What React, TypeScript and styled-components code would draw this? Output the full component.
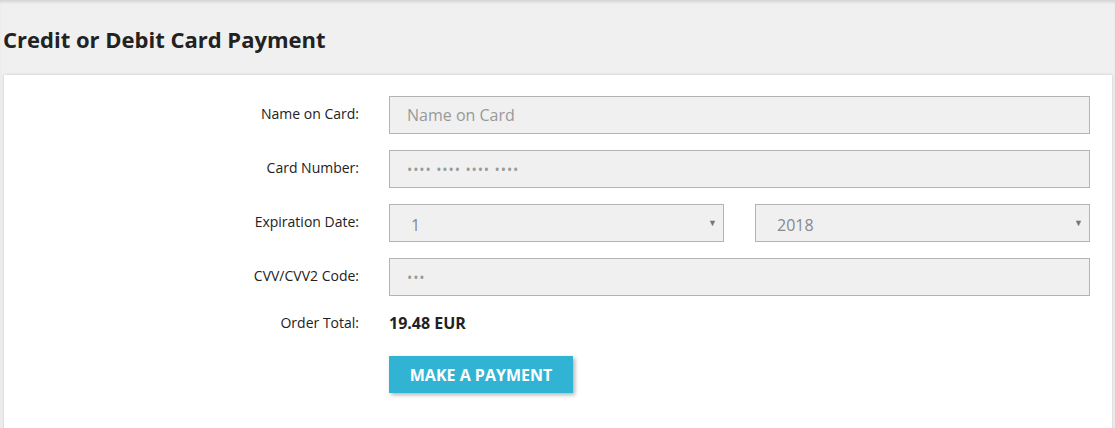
import React from "react";
import styled, { createGlobalStyle } from "styled-components";

const Global = createGlobalStyle`
  html, body { margin: 0; padding: 0; }
  body {
    background: #f0f0f0;
    font-family: "Open Sans", "Liberation Sans", sans-serif;
    color: #222;
  }
`;

const Page = styled.div`
  min-height: 428px;
  background: #f0f0f0;
  box-shadow: inset 0 3px 3px -1px rgba(0, 0, 0, 0.12);
  padding: 0 3px 0 4px;
  overflow: hidden;
`;

const Title = styled.h2`
  margin: 0 0 0 -1px;
  padding: 24px 0 21px 0;
  font-size: 22px;
  font-weight: 700;
  color: #222;
  line-height: 30px;
`;

const Card = styled.div`
  background: #fff;
  box-shadow: 0 0 3px rgba(0, 0, 0, 0.18);
  padding: 21px 22px 40px 0;
  min-height: 360px;
  box-sizing: border-box;
  display: grid;
  grid-template-columns: 355px 1fr;
  align-content: start;
  column-gap: 30px;
  row-gap: 16px;
  align-items: center;
`;

const Label = styled.label<{ $lift?: number }>`
  text-align: right;
  font-size: 14px;
  color: #222;
  padding-bottom: ${(p) => p.$lift ?? 4}px;
`;

const Field = styled.div`
  height: 38px;
  box-sizing: border-box;
  border: 1px solid #b4b4b4;
  background: #f0f0f0;
  display: flex;
  align-items: center;
  padding: 0 6px 0 17px;
  font-size: 16px;
  color: #999;
`;

const Dots = styled.span`
  font-size: 14px;
  letter-spacing: 0.9px;
  color: #999;
`;

const SelectRow = styled.div`
  display: grid;
  grid-template-columns: 1fr 1fr;
  column-gap: 31px;
`;

const Arrow = styled.span`
  margin-left: auto;
  font-size: 9px;
  color: #777;
  padding-bottom: 2px;
`;

const SelectValue = styled.span`
  padding-left: 4px;
  padding-top: 4px;
  color: #888;
`;

const Total = styled.div`
  font-size: 16px;
  font-weight: 700;
  color: #222;
`;

const Button = styled.button`
  justify-self: start;
  margin-top: 6px;
  width: 184px;
  height: 37px;
  border: none;
  background: #31b4d4;
  color: #fff;
  font-family: "Open Sans", "Liberation Sans", sans-serif;
  font-weight: 700;
  font-size: 16px;
  text-transform: uppercase;
  box-shadow: 2px 2px 4px rgba(0, 0, 0, 0.3);
`;

export default function App() {
  return (
    <>
      <Global />
      <Page>
        <Title>Credit or Debit Card Payment</Title>
        <Card>
          <Label>Name on Card:</Label>
          <Field>Name on Card</Field>

          <Label>Card Number:</Label>
          <Field>
            <Dots>•••• •••• •••• ••••</Dots>
          </Field>

          <Label>Expiration Date:</Label>
          <SelectRow>
            <Field>
              <SelectValue>1</SelectValue>
              <Arrow>▼</Arrow>
            </Field>
            <Field>
              <SelectValue>2018</SelectValue>
              <Arrow>▼</Arrow>
            </Field>
          </SelectRow>

          <Label>CVV/CVV2 Code:</Label>
          <Field>
            <Dots>•••</Dots>
          </Field>

          <Label $lift={2}>Order Total:</Label>
          <Total>19.48 EUR</Total>

          <span />
          <Button>Make a payment</Button>
        </Card>
      </Page>
    </>
  );
}
